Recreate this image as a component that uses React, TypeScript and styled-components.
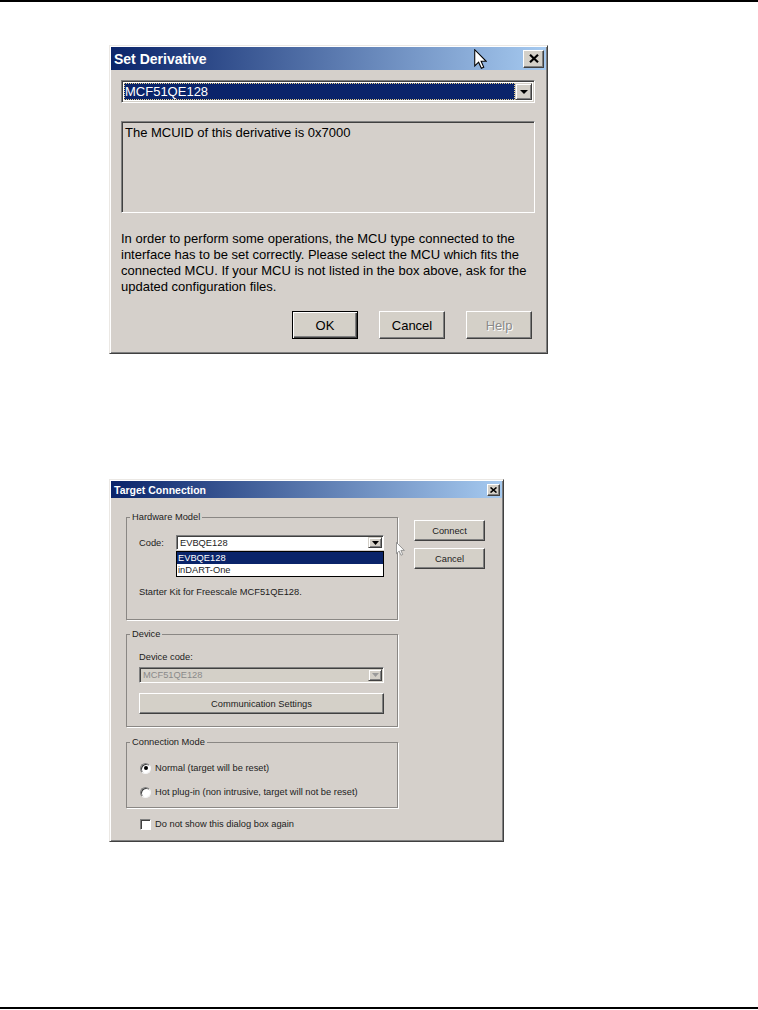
import React from 'react';
import styled, { createGlobalStyle } from 'styled-components';

const GlobalStyle = createGlobalStyle`
  html, body {
    margin: 0;
    padding: 0;
    background: #fff;
  }
  body {
    font-family: 'Liberation Sans', Arial, sans-serif;
  }
`;

const FACE = '#d5d0cb';
const NAVY = '#0a246a';

const Page = styled.div`
  width: 758px;
  height: 1009px;
  box-sizing: border-box;
  border-top: 2px solid #000;
  border-bottom: 2px solid #000;
  padding-top: 43px;
  display: flex;
  flex-direction: column;
`;

const Window = styled.div<{ $width: number; $small?: boolean; $gap?: number }>`
  position: relative;
  margin-left: 109px;
  margin-top: ${p => p.$gap || 0}px;
  width: ${p => p.$width}px;
  box-sizing: border-box;
  background: ${FACE};
  border: 1px solid;
  border-color: #ebe8e4 #404040 #404040 #ebe8e4;
  box-shadow: inset 1px 1px #fff, inset -1px -1px #808080;
  padding: 1px;
  font-family: 'Liberation Sans', Arial, sans-serif;
  font-size: ${p => (p.$small ? '9.3px' : '13px')};
  color: ${p => (p.$small ? '#1c1c1c' : '#000')};
`;

const TitleBar = styled.div<{ $small?: boolean }>`
  position: relative;
  display: flex;
  align-items: center;
  justify-content: space-between;
  height: ${p => (p.$small ? 17 : 23)}px;
  padding: 0 2px 0 3px;
  background: linear-gradient(to right, ${NAVY}, #a6caf0);
  color: #fff;
  font-weight: bold;
  font-size: ${p => (p.$small ? '10.5px' : '14px')};
`;

const CloseButton = styled.div<{ $small?: boolean }>`
  width: ${p => (p.$small ? 13 : 21)}px;
  height: ${p => (p.$small ? 12 : 18)}px;
  box-sizing: border-box;
  background: #d4d0c8;
  border: 1px solid;
  border-color: #fff #404040 #404040 #fff;
  box-shadow: inset -1px -1px #808080;
  display: flex;
  align-items: center;
  justify-content: center;
`;

const Pointer = styled.div<{ $left: number; $top: number }>`
  position: absolute;
  left: ${p => p.$left}px;
  top: ${p => p.$top}px;
  line-height: 0;
  pointer-events: none;
`;

/* ---------- Set Derivative ---------- */

const DerivBody = styled.div`
  display: flex;
  flex-direction: column;
  padding: 10px 11px 13px 10px;
`;

const BigCombo = styled.div`
  display: flex;
  height: 23px;
  box-sizing: border-box;
  border: 1px solid;
  border-color: #808080 #fff #fff #808080;
  box-shadow: inset 1px 1px #404040, inset -1px -1px #d4d0c8;
  padding: 2px;
  background: #fff;
`;

const SelectedValue = styled.div`
  flex: 1;
  background: ${NAVY};
  color: #fff;
  line-height: 17px;
  padding-left: 1px;
  outline: 1px dotted #e6cf8a;
  outline-offset: -1px;
`;

const DropButton = styled.div<{ $w: number; $disabled?: boolean }>`
  width: ${p => p.$w}px;
  box-sizing: border-box;
  background: #d4d0c8;
  border: 1px solid;
  border-color: #d4d0c8 #404040 #404040 #d4d0c8;
  box-shadow: inset 1px 1px #fff, inset -1px -1px #808080;
  display: flex;
  align-items: center;
  justify-content: center;
  color: ${p => (p.$disabled ? '#9a9a9a' : '#000')};
`;

const InfoBox = styled.div`
  margin-top: 18px;
  height: 92px;
  box-sizing: border-box;
  border: 1px solid;
  border-color: #808080 #fff #fff #808080;
  box-shadow: inset 1px 1px #404040;
  padding: 4px 3px;
  line-height: 14px;
`;

const Explain = styled.p`
  margin: 18px 0 0;
  line-height: 16px;
  white-space: nowrap;
`;

const ButtonRow = styled.div`
  display: flex;
  justify-content: flex-end;
  gap: 21px;
  margin-top: 16px;
  padding-right: 3px;
`;

const DialogButton = styled.div<{ $default?: boolean; $disabled?: boolean }>`
  width: 66px;
  height: 28px;
  box-sizing: border-box;
  display: flex;
  align-items: center;
  justify-content: center;
  background: #d4d0c8;
  border: 1px solid;
  border-color: ${p => (p.$default ? '#000' : '#fff #404040 #404040 #fff')};
  box-shadow: ${p =>
    p.$default
      ? 'inset 1px 1px #fff, inset -1px -1px #404040, inset -2px -2px #808080'
      : 'inset -1px -1px #808080'};
  color: ${p => (p.$disabled ? '#8a8a8a' : '#000')};
  text-shadow: ${p => (p.$disabled ? '1px 1px #fff' : 'none')};
`;

/* ---------- Target Connection ---------- */

const TargetBody = styled.div`
  display: flex;
  gap: 16px;
  padding: 13px 17px 10px 15px;
`;

const LeftColumn = styled.div`
  width: 272px;
  display: flex;
  flex-direction: column;
`;

const RightColumn = styled.div`
  display: flex;
  flex-direction: column;
  gap: 7px;
  padding-top: 9px;
`;

const Group = styled.fieldset<{ $top: number; $bottom: number; $gap?: number }>`
  margin: ${p => p.$gap || 0}px 0 0;
  padding: ${p => p.$top}px 13px ${p => p.$bottom}px 12px;
  border: 1px solid #8a8784;
  box-shadow: 1px 1px 0 #fff;
  min-width: 0;
`;

const GroupLabel = styled.legend`
  margin-left: -9px;
  padding: 0 2px;
  line-height: 12px;
  height: 12px;
`;

const FieldRow = styled.div`
  display: flex;
  align-items: center;
`;

const FieldLabel = styled.span`
  width: 37px;
  line-height: 12px;
`;

const Line = styled.div<{ $gap?: number }>`
  margin-top: ${p => p.$gap || 0}px;
  line-height: 12px;
`;

const SmallComboWrap = styled.div<{ $gap?: number }>`
  position: relative;
  flex: 1;
  margin-top: ${p => p.$gap || 0}px;
`;

const SmallCombo = styled.div<{ $disabled?: boolean; $h: number }>`
  display: flex;
  height: ${p => p.$h}px;
  box-sizing: border-box;
  border: 1px solid;
  border-color: #808080 #fff #fff #808080;
  box-shadow: inset 1px 1px #404040;
  padding: 1px;
  background: ${p => (p.$disabled ? '#d4d0c8' : '#fff')};
  color: ${p => (p.$disabled ? '#8a8a8a' : 'inherit')};
`;

const ComboText = styled.div`
  flex: 1;
  padding-left: 2px;
  display: flex;
  align-items: center;
`;

const DropList = styled.div`
  position: absolute;
  left: 0;
  right: 0;
  top: calc(100% + 1px);
  border: 1px solid #000;
  background: #fff;
  z-index: 2;
`;

const DropItem = styled.div<{ $active?: boolean }>`
  height: 12px;
  line-height: 12px;
  padding-left: 1px;
  background: ${p => (p.$active ? NAVY : '#fff')};
  color: ${p => (p.$active ? '#fff' : '#1c1c1c')};
`;

const WideButton = styled.div<{ $w?: number; $h: number; $gap?: number }>`
  width: ${p => (p.$w ? `${p.$w}px` : 'auto')};
  height: ${p => p.$h}px;
  margin-top: ${p => p.$gap || 0}px;
  box-sizing: border-box;
  display: flex;
  align-items: center;
  justify-content: center;
  background: #d4d0c8;
  border: 1px solid;
  border-color: #fff #404040 #404040 #fff;
  box-shadow: inset -1px -1px #808080;
`;

const OptionRow = styled.label<{ $gap?: number }>`
  display: flex;
  align-items: center;
  gap: 4px;
  height: 12px;
  margin-top: ${p => p.$gap || 0}px;
  padding-left: 1px;
`;

const Radio = styled.span<{ $checked?: boolean }>`
  width: 11px;
  height: 11px;
  box-sizing: border-box;
  border-radius: 50%;
  border: 1px solid;
  border-color: #808080 #f4f4f4 #f4f4f4 #808080;
  box-shadow: inset 1px 1px #404040;
  background: #fff;
  display: flex;
  align-items: center;
  justify-content: center;

  &::after {
    content: '';
    width: 4px;
    height: 4px;
    border-radius: 50%;
    background: ${p => (p.$checked ? '#000' : 'transparent')};
  }
`;

const CheckRow = styled.label`
  display: flex;
  align-items: center;
  gap: 4px;
  height: 12px;
  margin-top: 10px;
  padding-left: 14px;
`;

const CheckBox = styled.span`
  width: 11px;
  height: 11px;
  box-sizing: border-box;
  border: 1px solid;
  border-color: #808080 #fff #fff #808080;
  box-shadow: inset 1px 1px #404040;
  background: #fff;
`;

const CloseGlyph = ({ small }: { small?: boolean }) =>
  small ? (
    <svg width="7" height="6" viewBox="0 0 7 6">
      <path d="M0.5 0.5 L6.5 5.5 M6.5 0.5 L0.5 5.5" stroke="#000" strokeWidth="1.6" />
    </svg>
  ) : (
    <svg width="10" height="9" viewBox="0 0 10 9">
      <path d="M1 0.8 L9 8.2 M9 0.8 L1 8.2" stroke="#000" strokeWidth="2.2" />
    </svg>
  );

const DownArrow = ({ w, color = '#000' }: { w: number; color?: string }) => (
  <svg width={w} height={Math.ceil(w / 2)} viewBox={`0 0 ${w} ${Math.ceil(w / 2)}`}>
    <path d={`M0 0 H${w} L${w / 2} ${Math.ceil(w / 2)} Z`} fill={color} />
  </svg>
);

const Arrow = ({ scale, outline }: { scale: number; outline: string }) => (
  <svg width={12 * scale} height={19 * scale} viewBox="0 0 12 19">
    <path
      d="M0.7 0.7 V16.2 L4.4 12.6 L7 18.4 L9.3 17.4 L6.8 11.7 H11.6 Z"
      fill="#fff"
      stroke={outline}
      strokeWidth="1"
      strokeLinejoin="miter"
    />
  </svg>
);

const SetDerivative = () => (
  <Window $width={439}>
    <TitleBar>
      <span>Set Derivative</span>
      <CloseButton>
        <CloseGlyph />
      </CloseButton>
      <Pointer $left={363} $top={2}>
        <Arrow scale={1.05} outline="#000" />
      </Pointer>
    </TitleBar>
    <DerivBody>
      <BigCombo>
        <SelectedValue>MCF51QE128</SelectedValue>
        <DropButton $w={17}>
          <DownArrow w={8} />
        </DropButton>
      </BigCombo>
      <InfoBox>The MCUID of this derivative is 0x7000</InfoBox>
      <Explain>
        In order to perform some operations, the MCU type connected to the
        <br />
        interface has to be set correctly. Please select the MCU which fits the
        <br />
        connected MCU. If your MCU is not listed in the box above, ask for the
        <br />
        updated configuration files.
      </Explain>
      <ButtonRow>
        <DialogButton $default>OK</DialogButton>
        <DialogButton>Cancel</DialogButton>
        <DialogButton $disabled>Help</DialogButton>
      </ButtonRow>
    </DerivBody>
  </Window>
);

const TargetConnection = () => (
  <Window $width={395} $small $gap={125}>
    <TitleBar $small>
      <span>Target Connection</span>
      <CloseButton $small>
        <CloseGlyph small />
      </CloseButton>
    </TitleBar>
    <TargetBody>
      <LeftColumn>
        <Group $top={12} $bottom={21}>
          <GroupLabel>Hardware Model</GroupLabel>
          <FieldRow>
            <FieldLabel>Code:</FieldLabel>
            <SmallComboWrap>
              <SmallCombo $h={15}>
                <ComboText>EVBQE128</ComboText>
                <DropButton $w={14}>
                  <DownArrow w={7} />
                </DropButton>
              </SmallCombo>
              <DropList>
                <DropItem $active>EVBQE128</DropItem>
                <DropItem>inDART-One</DropItem>
              </DropList>
            </SmallComboWrap>
          </FieldRow>
          <Line $gap={36}>Starter Kit for Freescale MCF51QE128.</Line>
        </Group>

        <Group $top={11} $bottom={12} $gap={8}>
          <GroupLabel>Device</GroupLabel>
          <Line>Device code:</Line>
          <SmallComboWrap $gap={4}>
            <SmallCombo $h={16} $disabled>
              <ComboText>MCF51QE128</ComboText>
              <DropButton $w={14} $disabled>
                <DownArrow w={7} color="#9a9a9a" />
              </DropButton>
            </SmallCombo>
          </SmallComboWrap>
          <WideButton $h={21} $gap={10}>
            Communication Settings
          </WideButton>
        </Group>

        <Group $top={14} $bottom={9} $gap={9}>
          <GroupLabel>Connection Mode</GroupLabel>
          <OptionRow>
            <Radio $checked />
            Normal (target will be reset)
          </OptionRow>
          <OptionRow $gap={12}>
            <Radio />
            Hot plug-in (non intrusive, target will not be reset)
          </OptionRow>
        </Group>

        <CheckRow>
          <CheckBox />
          Do not show this dialog box again
        </CheckRow>
      </LeftColumn>

      <RightColumn>
        <WideButton $w={71} $h={21}>
          Connect
        </WideButton>
        <WideButton $w={71} $h={21}>
          Cancel
        </WideButton>
      </RightColumn>
    </TargetBody>
    <Pointer $left={286} $top={62}>
      <Arrow scale={0.72} outline="#777" />
    </Pointer>
  </Window>
);

export default function App() {
  return (
    <>
      <GlobalStyle />
      <Page>
        <SetDerivative />
        <TargetConnection />
      </Page>
    </>
  );
}
